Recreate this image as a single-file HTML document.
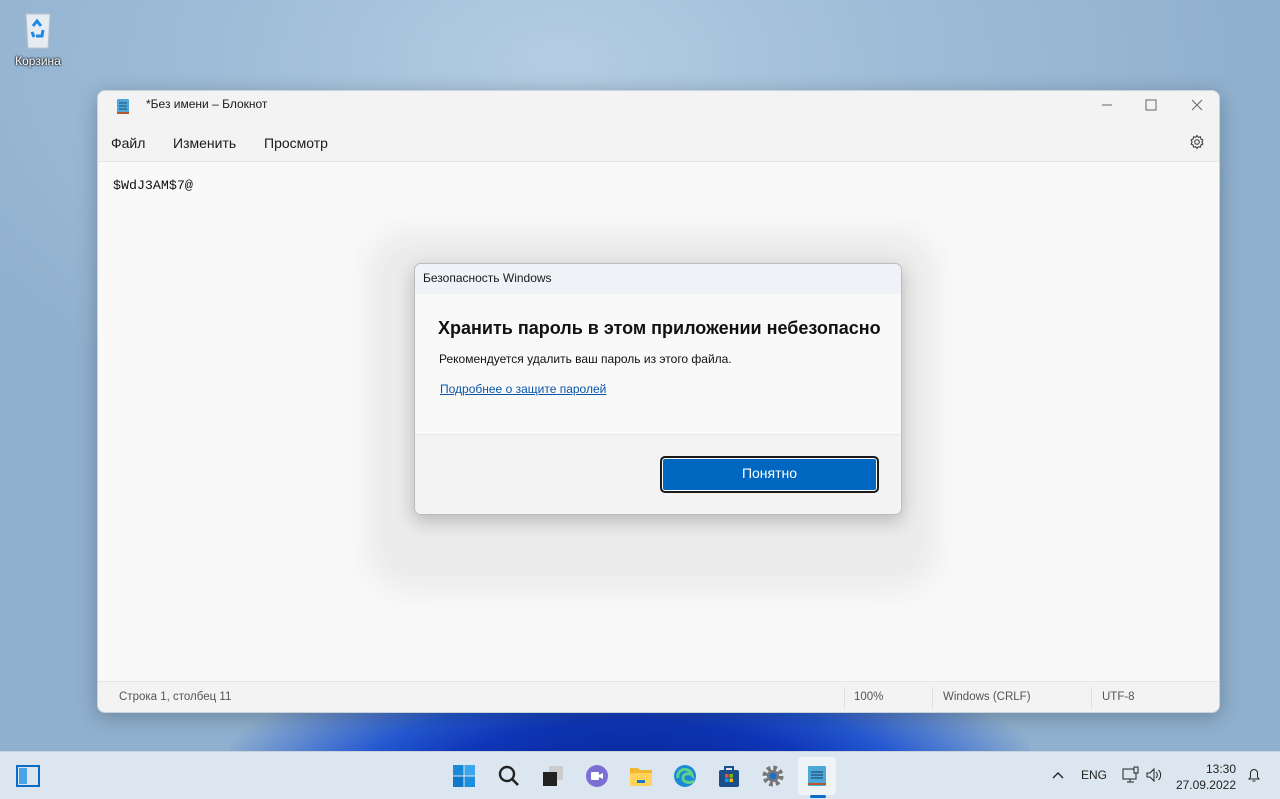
<!DOCTYPE html>
<html><head><meta charset="utf-8"><style>
*{margin:0;padding:0;box-sizing:border-box}
body{width:1280px;height:799px;overflow:hidden;position:relative;font-family:"Segoe UI","Liberation Sans","DejaVu Sans",sans-serif;
background:radial-gradient(ellipse 700px 400px at 560px 60px,#b4cde2 0%,#9ebcd7 50%,#8fb0cf 100%);}
.bloom{position:absolute;left:230px;top:650px;width:800px;height:110px;
background:radial-gradient(ellipse 420px 130px at 400px 130px,#06208a 0%,#0f36b8 45%,#2458d0 65%,rgba(80,130,210,0) 100%)}
.icon{position:absolute;left:12px;top:8px;width:52px;text-align:center;color:#fff;font-size:12px;text-shadow:0 0 2px #000,0 0 2px #000}
.win{position:absolute;left:97px;top:90px;width:1123px;height:623px;background:#f3f3f3;border-radius:8px;border:1px solid #c9d3dc;box-shadow:0 4px 20px rgba(0,0,0,.25);overflow:hidden}
.title{position:absolute;left:48px;top:6px;font-size:12px;color:#1a1a1a}
.menu{position:absolute;top:44px;font-size:14px;color:#1a1a1a}
.edit{position:absolute;left:0;top:70px;width:100%;height:521px;background:#f9f9f9;border-top:1px solid #e5e5e5;border-bottom:1px solid #e5e5e5}
.status{position:absolute;top:600px;font-size:11.5px;color:#555}
.sep{position:absolute;top:596px;width:1px;height:22px;background:#e0e0e0}
.glow{position:absolute;left:368px;top:232px;width:568px;height:358px;border-radius:40px;background:rgba(225,225,225,.6);filter:blur(14px)}
.dlg{position:absolute;left:414px;top:263px;width:488px;height:252px;background:#f9f9f9;border:1px solid #bcbcbc;border-radius:7px;overflow:hidden;box-shadow:0 6px 18px rgba(0,0,0,.22)}
.dh{height:30px;background:#eff2f6;font-size:12px;color:#1a1a1a;padding:7px 8px}
.foot{position:absolute;left:0;top:170px;width:100%;height:82px;background:#f3f3f3;border-top:1px solid #e8e8e8}
.btn{position:absolute;left:245px;top:21px;width:219px;height:37px;border:2px solid #1a1a1a;border-radius:5px;background:#0067c0;color:#fff;font-size:14px;text-align:center;line-height:31px;box-shadow:inset 0 0 0 1px #fff}
.tb{position:absolute;left:0;top:751px;width:1280px;height:48px;background:#dce6f0;border-top:1px solid #c8d2dc}
.ti{position:absolute;top:12px;width:24px;height:24px}
</style></head><body>
<div class="bloom"></div>
<div class="icon"><svg width="36" height="44" viewBox="0 0 36 44" style="display:block;margin:0 auto 2px"><path d="M6 6h24l-2 34H8z" fill="#e6ecf2" stroke="#b8c4cf"/><path d="M13 18l4-5 4 5M23 22l-1 6-6 0M12 24l2 5" stroke="#1e88e5" stroke-width="3" fill="none"/></svg>Корзина</div>
<div class="win">
<svg style="position:absolute;left:18px;top:6px" width="14" height="18" viewBox="0 0 14 18"><rect x="1" y="2" width="12" height="15" rx="1.5" fill="#4fa6d8"/><path d="M3 6h8M3 9h8M3 12h8" stroke="#1d4f77"/><rect x="1" y="15" width="12" height="2" fill="#b35a2a"/></svg>
<div class="title">*Без имени – Блокнот</div>
<svg style="position:absolute;left:1000px;top:8px" width="110" height="12"><path d="M4 6h10M48 1h10v10h-10zM94 1l10 10M104 1l-10 10" stroke="#666" fill="none"/></svg>
<div class="menu" style="left:13px">Файл</div><div class="menu" style="left:75px">Изменить</div><div class="menu" style="left:166px">Просмотр</div>
<svg style="position:absolute;left:1091px;top:43px" width="16" height="16" viewBox="0 0 16 16"><circle cx="8" cy="8" r="2.3" fill="none" stroke="#333"/><path d="M8 1.5l1.3 1.8 2.2-.5.4 2.2 2 1-1 2 1 2-2 1-.4 2.2-2.2-.5L8 14.5l-1.3-1.8-2.2.5-.4-2.2-2-1 1-2-1-2 2-1 .4-2.2 2.2.5z" fill="none" stroke="#333"/></svg>
<div class="edit"><div style="position:absolute;left:15px;top:16px;font-family:'Liberation Mono','DejaVu Sans Mono',monospace;font-size:13.3px;color:#111">$WdJ3AM$7@</div></div>
<div class="status" style="left:21px">Строка 1, столбец 11</div>
<div class="sep" style="left:746px"></div><div class="status" style="left:756px">100%</div>
<div class="sep" style="left:834px"></div><div class="status" style="left:845px">Windows (CRLF)</div>
<div class="sep" style="left:993px"></div><div class="status" style="left:1004px">UTF-8</div>
</div>
<div class="glow"></div>
<div class="dlg"><div class="dh">Безопасность Windows</div>
<div style="position:absolute;left:23px;top:54px;font-size:18px;font-weight:bold;color:#111">Хранить пароль в этом приложении небезопасно</div>
<div style="position:absolute;left:24px;top:88px;font-size:12px;color:#111">Рекомендуется удалить ваш пароль из этого файла.</div>
<div style="position:absolute;left:25px;top:118px;font-size:12px;color:#0a56a8;text-decoration:underline">Подробнее о защите паролей</div>
<div class="foot"><div class="btn">Понятно</div></div></div>
<div class="tb">
<svg class="ti" style="left:16px" viewBox="0 0 24 24"><rect x="1" y="2" width="22" height="20" fill="none" stroke="#0a6cc4" stroke-width="2"/><rect x="3" y="4" width="8" height="16" fill="#4aa3e8"/></svg>
<svg class="ti" style="left:452px" viewBox="0 0 24 24"><rect x="1" y="1" width="10.5" height="10.5" fill="#1a8ad8"/><rect x="12.5" y="1" width="10.5" height="10.5" fill="#3aa6ee"/><rect x="1" y="12.5" width="10.5" height="10.5" fill="#0f78c8"/><rect x="12.5" y="12.5" width="10.5" height="10.5" fill="#1e8edc"/></svg>
<svg class="ti" style="left:497px" viewBox="0 0 24 24"><circle cx="10" cy="10" r="7" fill="none" stroke="#222" stroke-width="2.4"/><path d="M15 15l6 6" stroke="#222" stroke-width="2.6"/></svg>
<svg class="ti" style="left:541px" viewBox="0 0 24 24"><rect x="8" y="2" width="14" height="14" fill="#ccc"/><rect x="2" y="8" width="14" height="14" fill="#222"/></svg>
<svg class="ti" style="left:585px" viewBox="0 0 24 24"><circle cx="12" cy="12" r="11" fill="#7b6fd6"/><rect x="6" y="8" width="8" height="8" rx="1" fill="#fff"/><path d="M14 11l4-2v6l-4-2z" fill="#fff"/></svg>
<svg class="ti" style="left:629px" viewBox="0 0 24 24"><path d="M1 4h8l2 2h12v16H1z" fill="#f2b630"/><rect x="1" y="9" width="22" height="13" fill="#ffd35a"/><rect x="8" y="16" width="8" height="3" fill="#1e78c8"/></svg>
<svg class="ti" style="left:673px" viewBox="0 0 24 24"><circle cx="12" cy="12" r="11" fill="#1a8ad8"/><path d="M5 14a7 7 0 0 1 14-3c-2-2-9-2-9 3 0 4 6 6 11 3" fill="none" stroke="#5fd08a" stroke-width="3"/></svg>
<svg class="ti" style="left:717px" viewBox="0 0 24 24"><path d="M8 6V3h8v3" fill="none" stroke="#1c4f8a" stroke-width="2"/><rect x="2" y="6" width="20" height="17" rx="2" fill="#1c4f8a"/><rect x="8" y="10" width="3.5" height="3.5" fill="#f25022"/><rect x="12.5" y="10" width="3.5" height="3.5" fill="#7fba00"/><rect x="8" y="14.5" width="3.5" height="3.5" fill="#00a4ef"/><rect x="12.5" y="14.5" width="3.5" height="3.5" fill="#ffb900"/></svg>
<svg class="ti" style="left:761px" viewBox="0 0 24 24"><circle cx="12" cy="12" r="8" fill="none" stroke="#777" stroke-width="5" stroke-dasharray="3.5 2.8"/><circle cx="12" cy="12" r="6" fill="#777"/><circle cx="12" cy="12" r="3.5" fill="#1e6fc8"/></svg>
<div style="position:absolute;left:798px;top:5px;width:38px;height:38px;background:#eef3f8;border-radius:4px"></div>
<svg class="ti" style="left:805px" viewBox="0 0 24 24"><rect x="3" y="2" width="18" height="20" rx="1" fill="#4fa6d8"/><path d="M6 8h12M6 11h12M6 14h12" stroke="#1d4f77" stroke-width="1.3"/><rect x="3" y="19" width="18" height="2" fill="#b35a2a"/></svg>
<div style="position:absolute;left:810px;top:43px;width:16px;height:3px;border-radius:2px;background:#0a6cc4"></div>
<svg style="position:absolute;left:1052px;top:19px" width="12" height="8"><path d="M1 7l5-5 5 5" stroke="#222" stroke-width="1.4" fill="none"/></svg>
<div style="position:absolute;left:1081px;top:16px;font-size:12px;color:#222">ENG</div>
<svg style="position:absolute;left:1122px;top:14px" width="18" height="18"><rect x="1" y="3" width="13" height="10" fill="none" stroke="#222"/><path d="M5 16h7M8 13v3" stroke="#222"/><rect x="12" y="1" width="4" height="6" fill="#dce6f0" stroke="#222"/></svg>
<svg style="position:absolute;left:1145px;top:15px" width="18" height="16"><path d="M2 6h3l4-4v12l-4-4H2z" fill="none" stroke="#222"/><path d="M11 5a4 4 0 0 1 0 6M13.5 3a7 7 0 0 1 0 10" fill="none" stroke="#222"/></svg>
<div style="position:absolute;left:1170px;top:9px;width:66px;text-align:right;font-size:12px;color:#222;line-height:16px">13:30<br>27.09.2022</div>
<svg style="position:absolute;left:1247px;top:15px" width="14" height="16"><path d="M2 12h10l-1.5-2V6a3.5 3.5 0 0 0-7 0v4zM5.5 14h3" stroke="#222" fill="none"/></svg>
</div>
</body></html>
